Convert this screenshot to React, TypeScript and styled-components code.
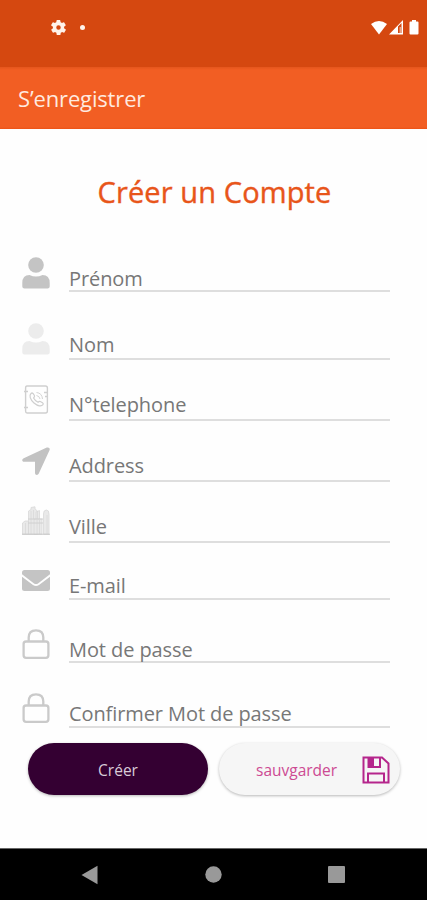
import React from "react";
import styled, { createGlobalStyle } from "styled-components";

const GlobalStyle = createGlobalStyle`
  * { box-sizing: border-box; }
  body { margin: 0; background: #fff; font-family: "Open Sans", "Noto Sans", sans-serif; }
`;

const Screen = styled.div`
  width: 427px;
  height: 900px;
  display: flex;
  flex-direction: column;
  background: #fefefe;
  overflow: hidden;
`;

const StatusBar = styled.header`
  height: 67px;
  flex: none;
  display: flex;
  justify-content: space-between;
  align-items: flex-start;
  padding: 19px 7px 0 51px;
  background: #d54810;
`;

const StatusGroup = styled.div<{ $gap: number }>`
  display: flex;
  align-items: center;
  height: 16px;
  gap: ${(p) => p.$gap}px;
`;

const Dot = styled.span`
  width: 5px;
  height: 5px;
  border-radius: 50%;
  background: #fff3ea;
`;

const AppBar = styled.div`
  height: 62px;
  flex: none;
  display: flex;
  align-items: center;
  padding: 0 18px 1px;
  background: linear-gradient(#e5561d 0, #f25e23 3px, #f25e23 60px, #ec5315 62px);
  color: #ffe9df;
  font-size: 22px;
`;

const AppTitle = styled.span`
  letter-spacing: -0.15px;
`;

const Content = styled.main`
  flex: 1;
  display: flex;
  flex-direction: column;
`;

const Heading = styled.h1`
  margin: 42px 0 0;
  height: 42px;
  line-height: 42px;
  text-align: center;
  font-size: 29px;
  font-weight: 400;
  letter-spacing: 0.12px;
  padding-left: 2px;
  color: #e8551a;
  -webkit-text-stroke: 0.4px #e8551a;
`;

const Form = styled.form`
  margin: 0;
  padding: 15px 37px 0 22px;
`;

const Row = styled.label<{ $height: number }>`
  height: ${(p) => p.$height}px;
  display: flex;
  align-items: flex-end;
  gap: 19px;
`;

const IconSlot = styled.span<{ $lift: number }>`
  width: 28px;
  flex: none;
  display: flex;
  justify-content: center;
  margin-bottom: ${(p) => p.$lift}px;
`;

const Field = styled.span<{ $lift: number }>`
  flex: 1;
  display: block;
  padding-bottom: ${(p) => p.$lift}px;
  border-bottom: 2px solid #dedede;
  line-height: 22px;
  font-size: 20px;
  letter-spacing: -0.09px;
  color: #777;
  white-space: nowrap;
`;

const Actions = styled.div`
  display: flex;
  gap: 11px;
  padding: 15px 27px 0 28px;
`;

const Button = styled.button<{ $primary?: boolean }>`
  width: ${(p) => (p.$primary ? 180 : 181)}px;
  height: 52px;
  border: 0;
  border-radius: 26px;
  display: flex;
  align-items: center;
  justify-content: ${(p) => (p.$primary ? "center" : "space-between")};
  padding: ${(p) => (p.$primary ? "1px 0 0" : "1px 10px 0 37px")};
  font-family: inherit;
  font-size: 15.5px;
  background: ${(p) => (p.$primary ? "#340032" : "#f6f6f6")};
  color: ${(p) => (p.$primary ? "#d8cbd8" : "#cd4a93")};
  box-shadow: 0 1px 3px rgba(0, 0, 0, 0.28);
`;

const NavBar = styled.nav`
  height: 52px;
  flex: none;
  display: flex;
  align-items: center;
  justify-content: space-between;
  padding: 0 82px 0 81px;
  background: #000;
  border-top: 1px solid #666;
`;

const UserIcon = ({ color }: { color: string }) => (
  <svg width="28" height="32" viewBox="0 0 28 32" fill={color}>
    <circle cx="14" cy="8" r="7.8" />
    <path d="M7.5 18Q14 21 20.5 18Q27.7 18 27.7 26V29.5Q27.7 31.6 25.5 31.6H2.5Q.3 31.6 .3 29.5V26Q.3 18 7.5 18Z" />
  </svg>
);

const PhoneBookIcon = () => (
  <svg width="26" height="29" viewBox="0 0 26 29" fill="none" stroke="#cfcfcf" strokeWidth="1.4">
    <path d="M4 1H22.5Q24.4 1 24.4 3V26Q24.4 28 22.5 28H4Q2.6 28 2.6 26V3Q2.6 1 4 1Z" />
    <path d="M1 6.5H5M1 22.5H5M21 7.5H24M22 11.5H24" />
    <path strokeWidth="1.2" d="M8 8.5C6 10.5 7 14.5 11 18C15 21.5 18.5 21.5 20 19.7Q20.7 18.5 19.5 17.7L17.3 16.5Q16.3 16.2 15 17.3C13 16.3 11.5 14.7 10.6 13Q12 11.5 11.4 10.5L10 8.5Q9 7.5 8 8.5Z" />
    <path strokeWidth=".9" d="M13.5 7.5Q19 8 19.5 14M13.5 10.5Q16.5 11 17 14" />
  </svg>
);

const LocationIcon = () => (
  <svg width="28" height="28" viewBox="0 0 28 28" fill="#c2c2c2">
    <path d="M24.8.6 1.7 11.2C-.6 12.3 0 14.7 2 14.7H13V26C13 28.2 15.9 28.6 16.8 26.6L27.5 3.3C28.3 1.3 26.8-.2 24.8.6Z" />
  </svg>
);

const CityIcon = () => (
  <svg width="28" height="29" viewBox="0 0 28 29" stroke="#d8d8d8" strokeWidth=".8" fill="#e9e9e9">
    <path d="M.5 28V17L3 15H6.5V28ZM6.5 28V5L9 3.5V1.5L13 .8V3L15.5 5V28ZM14 28V6L17.5 4.5V14H14Z" />
    <path d="M12 28V13H20V28ZM21.500 28V8Q21.500 4 24.300 4T27 8V28Z" />
    <path fill="none" d="M9 5V28M11.5 4V13M3.5 17V28M15 14V28M17.5 14V28M25 9V28" />
    <path stroke="#bdbdbd" d="M0 28.3H28" />
    <path stroke="#d0d0d0" strokeWidth="1" d="M6 17H21M6 13H21" />
  </svg>
);

const MailIcon = () => (
  <svg width="28" height="21" viewBox="0 0 28 21" fill="#c4c4c4">
    <path d="M2.5 0H25.5Q28 0 28 2.5V4.2L16 13.4Q14 14.8 12 13.4L0 4.2V2.5Q0 0 2.5 0Z" />
    <path d="M0 6.7 11 14.9Q14 17 17 14.9L28 6.7V18.5Q28 21 25.5 21H2.5Q0 21 0 18.5Z" />
  </svg>
);

const LockIcon = () => (
  <svg width="28" height="30" viewBox="0 0 28 30" fill="none" stroke="#cacaca" strokeWidth="2.3">
    <rect x="1.6" y="12.5" width="24.8" height="16.3" rx="2.5" />
    <path d="M6.7 12.5V8.5Q6.7 1.3 14 1.3T21.3 8.5V12.5" />
  </svg>
);

const SaveIcon = () => (
  <svg width="28" height="28" viewBox="0 0 28 28" fill="none" stroke="#b5268c" strokeWidth="2">
    <path d="M1.5 1.5H20L26.5 7.5V26.5H1.5Z" />
    <path d="M6.5 1.5V11H18V1.5M6 26.5V17.5H22V26.5" />
    <path d="M7 2H12V10H7Z" fill="#b5268c" stroke="none" />
  </svg>
);

const fields = [
  { label: "Prénom", height: 64, text: 0, lift: 3, icon: <UserIcon color="#c4c4c4" /> },
  { label: "Nom", height: 68, text: 2, lift: 5, icon: <UserIcon color="#ececec" /> },
  { label: "N°telephone", height: 61, text: 3, lift: 7, icon: <PhoneBookIcon /> },
  { label: "Address", height: 61, text: 3, lift: 7, icon: <LocationIcon /> },
  { label: "Ville", height: 61, text: 3, lift: 8, icon: <CityIcon /> },
  { label: "E-mail", height: 57, text: 1, lift: 9, icon: <MailIcon /> },
  { label: "Mot de passe", height: 63, text: 0, lift: 4, icon: <LockIcon /> },
  { label: "Confirmer Mot de passe", height: 65, text: 1, lift: 5, icon: <LockIcon /> },
];

export default function App() {
  return (
    <Screen>
      <GlobalStyle />
      <StatusBar>
        <StatusGroup $gap={14}>
          <svg width="15" height="15" viewBox="2 2 20 20" fill="#fff3ea">
            <path
              fillRule="evenodd"
              d="M19.4 13a7.500 7.500 0 0 0 0-2l2.100-1.600a.5.5 0 0 0 .1-.6l-2-3.500a.5.5 0 0 0-.6-.2l-2.500 1a7.300 7.300 0 0 0-1.700-1l-.4-2.600a.5.5 0 0 0-.5-.4h-4a.5.5 0 0 0-.5.4l-.4 2.600a7.700 7.700 0 0 0-1.700 1l-2.500-1a.5.5 0 0 0-.6.2l-2 3.500a.5.5 0 0 0 .1.6L4.600 11a8 8 0 0 0 0 2l-2.100 1.600a.5.5 0 0 0-.1.6l2 3.500c.1.2.4.3.6.2l2.500-1a7.300 7.300 0 0 0 1.700 1l.4 2.600c0 .2.2.4.5.4h4c.2 0 .5-.2.5-.4l.4-2.600a7.700 7.700 0 0 0 1.700-1l2.500 1c.2.1.5 0 .6-.2l2-3.500a.5.5 0 0 0-.1-.6ZM12 15a3 3 0 1 1 0-6 3 3 0 0 1 0 6Z"
            />
          </svg>
          <Dot />
        </StatusGroup>
        <StatusGroup $gap={0}>
          <svg width="50" height="15" viewBox="0 0 50 15" fill="#fff">
            <path d="M1 4Q9 -2 17 4L9 14.500Z" />
            <path fillRule="evenodd" d="M19 14.500 33 0V14.500ZM28 6.500V13H31.500V3Z" />
            <path d="M29.500 7H31V13H29.500Z" opacity=".5" />
            <path d="M42 0H46V1.500H47.500Q48.500 1.500 48.500 2.500V13.500Q48.500 14.500 47.500 14.500H40.500Q39.500 14.500 39.500 13.500V2.500Q39.500 1.500 40.500 1.500H42Z" />
          </svg>
        </StatusGroup>
      </StatusBar>
      <AppBar>
        <AppTitle>S’enregistrer</AppTitle>
      </AppBar>
      <Content>
        <Heading>Créer un Compte</Heading>
        <Form>
          {fields.map((f) => (
            <Row key={f.label} $height={f.height}>
              <IconSlot $lift={f.lift}>{f.icon}</IconSlot>
              <Field $lift={f.text}>{f.label}</Field>
            </Row>
          ))}
        </Form>
        <Actions>
          <Button $primary>Créer</Button>
          <Button>
            sauvgarder
            <SaveIcon />
          </Button>
        </Actions>
      </Content>
      <NavBar>
        <svg width="17" height="20" viewBox="0 0 17 20" fill="#999">
          <path d="M16.500.8V19.200L.5 10Z" />
        </svg>
        <svg width="17" height="17" viewBox="0 0 17 17" fill="#999">
          <circle cx="8.500" cy="8.500" r="8.200" />
        </svg>
        <svg width="17" height="17" viewBox="0 0 17 17" fill="#999">
          <rect width="17" height="17" rx="1" />
        </svg>
      </NavBar>
    </Screen>
  );
}
